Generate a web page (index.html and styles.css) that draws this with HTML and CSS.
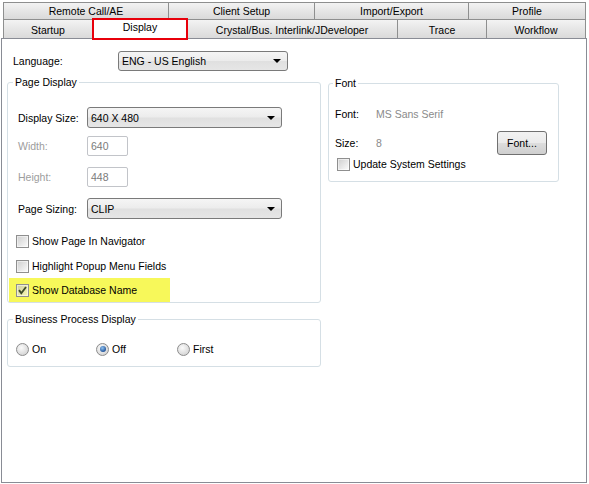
FILE: index.html
```html
<!DOCTYPE html>
<html>
<head>
<meta charset="utf-8">
<link rel="stylesheet" href="styles.css">
</head>
<body>
<div class="tabs">
  <div class="tabrow row1">
    <div class="tab first w-remote">Remote Call/AE</div>
    <div class="tab w-client">Client Setup</div>
    <div class="tab w-import">Import/Export</div>
    <div class="tab w-profile">Profile</div>
  </div>
  <div class="tabrow row2">
    <div class="tab first w-startup">Startup</div>
    <div class="tab selected">Display</div>
    <div class="tab w-crystal">Crystal/Bus. Interlink/JDeveloper</div>
    <div class="tab w-trace">Trace</div>
    <div class="tab w-workflow">Workflow</div>
  </div>
</div>
<div class="panel">
  <div class="langrow">
    <span class="lang-label">Language:</span>
    <div class="combo lang"><span>ENG - US English</span><i class="arrow"></i></div>
  </div>
  <div class="columns">
    <div class="leftcol">
      <fieldset class="group pagedisp">
        <legend>Page Display</legend>
        <div class="frow r-size">
          <span class="flabel">Display Size:</span>
          <div class="combo wide"><span>640 X 480</span><i class="arrow"></i></div>
        </div>
        <div class="frow r-width">
          <span class="flabel disabled">Width:</span>
          <div class="tinput">640</div>
        </div>
        <div class="frow r-height">
          <span class="flabel disabled">Height:</span>
          <div class="tinput">448</div>
        </div>
        <div class="frow r-sizing">
          <span class="flabel">Page Sizing:</span>
          <div class="combo wide"><span>CLIP</span><i class="arrow"></i></div>
        </div>
        <div class="crow c1"><span class="cbox"></span><span>Show Page In Navigator</span></div>
        <div class="crow c2"><span class="cbox"></span><span>Highlight Popup Menu Fields</span></div>
        <div class="crow c3 highlight"><span class="cbox checked"><svg width="13" height="13" viewBox="0 0 13 13"><path d="M3 6.2 L5.3 9.2 L10 3" fill="none" stroke="#3e4c2a" stroke-width="1.9"/></svg></span><span>Show Database Name</span></div>
      </fieldset>
      <fieldset class="group bpd">
        <legend>Business Process Display</legend>
        <div class="radios">
          <div class="ritem r-on"><span class="radio"></span><span>On</span></div>
          <div class="ritem r-off"><span class="radio on"></span><span>Off</span></div>
          <div class="ritem"><span class="radio"></span><span>First</span></div>
        </div>
      </fieldset>
    </div>
    <fieldset class="group fontgrp">
      <legend>Font</legend>
      <div class="fontrow f1"><span class="fl">Font:</span><span class="fv">MS Sans Serif</span></div>
      <div class="fontrow f2"><span class="fl">Size:</span><span class="fv">8</span><div class="btn">Font...</div></div>
      <div class="crow f3"><span class="cbox"></span><span>Update System Settings</span></div>
    </fieldset>
  </div>
</div>
</body>
</html>
```
FILE: styles.css
```css
html, body {
  margin: 0;
  padding: 0;
  background: #fff;
}
body {
  width: 589px;
  height: 484px;
  overflow: hidden;
  font-family: "Liberation Sans", Arial, sans-serif;
  font-size: 10.5px;
  color: #000;
}
.tabs {
  padding: 2px 0 0 3px;
}
.tabrow {
  display: flex;
}
.row1 { height: 17px; }
.row2 { height: 19px; }
.tab {
  box-sizing: border-box;
  height: 100%;
  margin-left: -1px;
  border: 1px solid #8e8f8f;
  border-bottom: none;
  background: linear-gradient(#f3f3f3, #e6e6e6 50%, #dadada);
  display: flex;
  align-items: center;
  justify-content: center;
  white-space: nowrap;
}
.tab.first { margin-left: 0; }
.row2 .tab { padding-top: 2px; }
.w-remote { width: 166px; }
.w-client { width: 147px; }
.w-import { width: 155px; }
.w-profile { width: 118px; }
.w-startup { width: 90px; }
.w-crystal { width: 212px; margin-left: -2px; }
.w-trace { width: 90px; }
.w-workflow { width: 100px; }
.tab.selected {
  position: relative;
  z-index: 2;
  width: 96px;
  height: 22px;
  margin-top: -1px;
  border: 2px solid #e8000b;
  background: #fff;
  padding-top: 0;
  padding-bottom: 4px;
}
.panel {
  box-sizing: border-box;
  margin-left: 1px;
  width: 586px;
  height: 445px;
  border: 1px solid #898c95;
  padding: 12px 0 0 5px;
  position: relative;
  z-index: 1;
}
.langrow {
  display: flex;
  align-items: center;
  height: 20px;
}
.lang-label {
  margin-left: 6px;
  width: 105px;
}
.combo {
  box-sizing: border-box;
  position: relative;
  height: 20px;
  border: 1px solid #7a7a7a;
  border-radius: 3px;
  background: linear-gradient(#f5f5f5, #ececec 48%, #e0e0e0 52%, #e6e6e6);
  display: flex;
  align-items: center;
  padding-left: 3px;
}
.combo.lang { width: 170px; }
.combo.wide { width: 195px; height: 21px; }
.arrow {
  position: absolute;
  right: 6px;
  top: 50%;
  margin-top: -2px;
  width: 0;
  height: 0;
  border-left: 4px solid transparent;
  border-right: 4px solid transparent;
  border-top: 4px solid #000;
}
.columns {
  display: flex;
  align-items: flex-start;
  gap: 7px;
  margin-top: 5px;
}
.group {
  margin: 0;
  padding: 0;
  border: 1px solid #d5dfe5;
  border-radius: 3px;
  min-width: 0;
  box-sizing: border-box;
}
.group legend {
  padding: 0 2px;
  margin-left: 5px;
  line-height: 13px;
}
.fontgrp legend { margin-left: 4px; }
.pagedisp { width: 314px; padding-top: 18px; }
.frow {
  display: flex;
  align-items: center;
  padding-left: 10px;
}
.flabel { width: 69px; }
.flabel.disabled { color: #9d9d9d; }
.r-width { margin-top: 8px; }
.r-height { margin-top: 11px; }
.r-sizing { margin-top: 11px; }
.tinput {
  box-sizing: border-box;
  width: 41px;
  height: 20px;
  border: 1px solid #c2c4c9;
  border-radius: 2px;
  color: #7b7b7b;
  padding-left: 3px;
  display: flex;
  align-items: center;
}
.crow {
  display: flex;
  align-items: center;
  gap: 3px;
  height: 24px;
  padding-left: 8px;
}
.c1 { margin-top: 10px; }
.c2 { margin-top: 1px; }
.highlight {
  width: 161px;
  box-sizing: border-box;
  margin-left: 1px;
  padding-left: 7px;
  height: 24px;
  background: #f7f85a;
}
.cbox {
  box-sizing: border-box;
  width: 13px;
  height: 13px;
  border: 1px solid #8f8f8f;
  background: linear-gradient(135deg, rgba(190,190,190,0.75), rgba(250,250,250,0.55));
  box-shadow: inset 0 0 0 1px rgba(255,255,255,0.5);
  display: flex;
  align-items: center;
  justify-content: center;
}
.cbox svg { display: block; margin: -1px; }
.bpd {
  width: 314px;
  margin-top: 10px;
  padding: 15px 0 9px 0;
}
.radios {
  display: flex;
  height: 16px;
  align-items: center;
  padding-left: 8px;
}
.ritem {
  display: flex;
  align-items: center;
  gap: 3px;
}
.r-on { width: 80px; }
.r-off { width: 81px; }
.radio {
  box-sizing: border-box;
  width: 13px;
  height: 13px;
  border-radius: 50%;
  border: 1px solid #8c8c8c;
  background: radial-gradient(circle at 40% 35%, #fbfbfb, #d4d4d4 80%);
  position: relative;
}
.radio.on::after {
  content: "";
  position: absolute;
  left: 2.5px;
  top: 2.5px;
  width: 6px;
  height: 6px;
  border-radius: 50%;
  background: radial-gradient(circle at 40% 35%, #8fc2f0, #1c4f97 75%);
}
.fontgrp {
  width: 231px;
  margin-top: 1px;
  padding: 16px 11px 9px 0;
}
.fontrow {
  display: flex;
  align-items: center;
  padding-left: 6px;
}
.fl { width: 41px; }
.fv { color: #8a8a8a; }
.f1 { height: 16px; }
.f2 { height: 24px; margin-top: 9px; }
.btn {
  box-sizing: border-box;
  margin-left: auto;
  width: 50px;
  height: 24px;
  border: 1px solid #707070;
  border-radius: 3px;
  background: linear-gradient(#f2f2f2, #ebebeb 48%, #dddddd 52%, #cfcfcf);
  display: flex;
  align-items: center;
  justify-content: center;
}
.f3 { height: 16px; margin-top: 1px; padding-left: 8px; }
```
